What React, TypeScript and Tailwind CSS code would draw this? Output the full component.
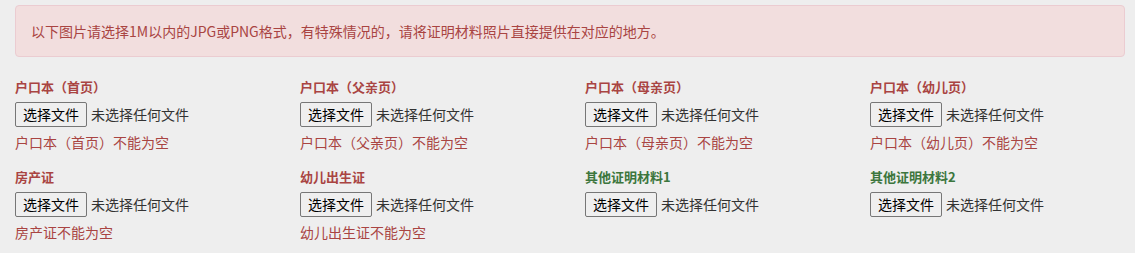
const fields: { label: string; error?: string; ok?: boolean }[] = [
  { label: '户口本（首页）', error: '户口本（首页）不能为空' },
  { label: '户口本（父亲页）', error: '户口本（父亲页）不能为空' },
  { label: '户口本（母亲页）', error: '户口本（母亲页）不能为空' },
  { label: '户口本（幼儿页）', error: '户口本（幼儿页）不能为空' },
  { label: '房产证', error: '房产证不能为空' },
  { label: '幼儿出生证', error: '幼儿出生证不能为空' },
  { label: '其他证明材料1', ok: true },
  { label: '其他证明材料2', ok: true },
];

export default function App() {
  return (
    <div className="min-h-[253px] w-full bg-[#eeeeee] pt-[5px] font-['Noto_Sans_CJK_SC',sans-serif] text-[14px] text-[#333]">
      <div className="ml-[15px] w-[1110px] rounded-[4px] border border-[#ebccd1] bg-[#f2dede] px-[15px] py-[15px] leading-[20px] text-[#a94442]">
        以下图片请选择1M以内的JPG或PNG格式，有特殊情况的，请将证明材料照片直接提供在对应的地方。
      </div>
      <div className="mt-[20px] ml-[15px] grid grid-cols-[repeat(4,270px)] gap-x-[15px] gap-y-[15px]">
        {fields.map((f) => (
          <FileField key={f.label} {...f} />
        ))}
      </div>
    </div>
  );
}

function FileField({ label, error, ok }: { label: string; error?: string; ok?: boolean }) {
  return (
    <div className="flex flex-col">
      <div className={`text-[13px] font-bold leading-[20px] ${ok ? 'text-[#3c763d]' : 'text-[#a94442]'}`}>{label}</div>
      <div className="mt-[5px] flex h-[25px] items-center">
        <button className="h-[25px] rounded-[2px] border border-[#767676] bg-[#efefef] px-[7px] text-[14px] leading-[23px] text-black">
          选择文件
        </button>
        <span className="ml-[4px] text-[14px] leading-[25px] text-[#333]">未选择任何文件</span>
      </div>
      {error && <div className="mt-[5px] text-[14px] leading-[20px] text-[#a94442]">{error}</div>}
    </div>
  );
}
